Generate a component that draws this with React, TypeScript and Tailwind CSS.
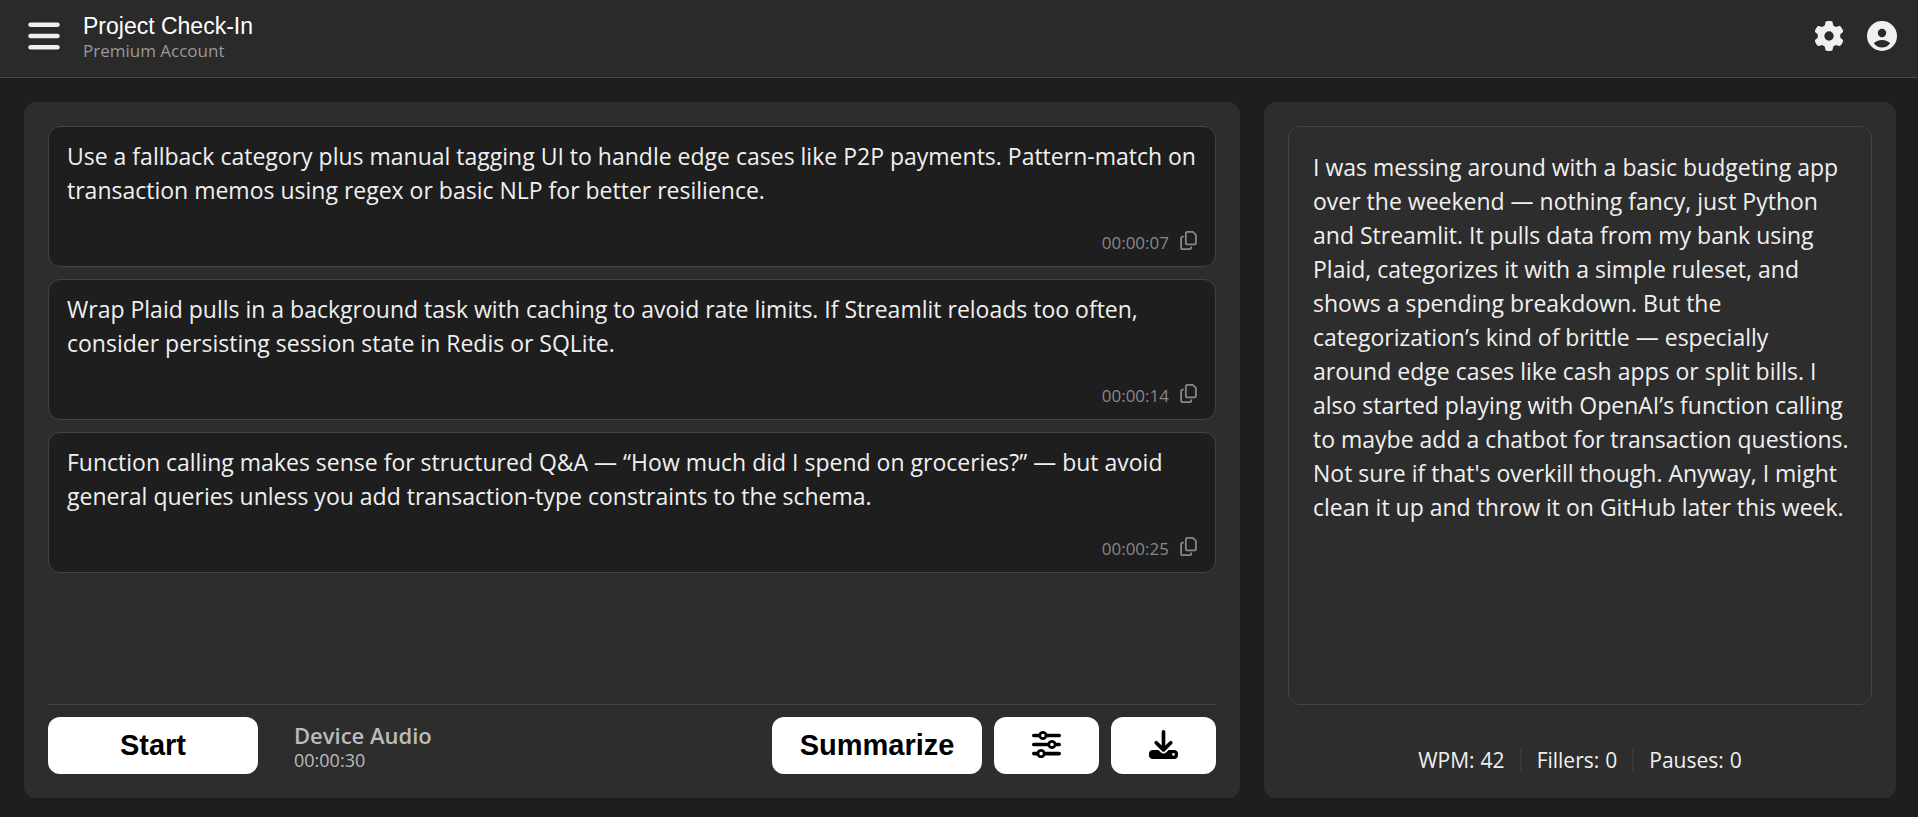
import React, { useState } from "react";
import { FaBars, FaDownload, FaGear, FaRegCopy, FaSliders } from "react-icons/fa6";

const insights = [
  {
    time: "00:00:07",
    text: "Use a fallback category plus manual tagging UI to handle edge cases like P2P payments. Pattern-match on transaction memos using regex or basic NLP for better resilience.",
  },
  {
    time: "00:00:14",
    text: "Wrap Plaid pulls in a background task with caching to avoid rate limits. If Streamlit reloads too often, consider persisting session state in Redis or SQLite.",
  },
  {
    time: "00:00:25",
    text: "Function calling makes sense for structured Q&A — “How much did I spend on groceries?” — but avoid general queries unless you add transaction-type constraints to the schema.",
  },
];

const transcript =
  "I was messing around with a basic budgeting app over the weekend — nothing fancy, just Python and Streamlit. It pulls data from my bank using Plaid, categorizes it with a simple ruleset, and shows a spending breakdown. But the categorization’s kind of brittle — especially around edge cases like cash apps or split bills. I also started playing with OpenAI’s function calling to maybe add a chatbot for transaction questions. Not sure if that's overkill though. Anyway, I might clean it up and throw it on GitHub later this week.";

const stats = [
  { label: "WPM", value: 42 },
  { label: "Fillers", value: 0 },
  { label: "Pauses", value: 0 },
];

const AccountIcon = () => (
  <svg viewBox="0 0 30 30" className="size-[30px]" fill="currentColor" aria-hidden="true">
    <path
      fillRule="evenodd"
      d="M15 0a15 15 0 1 0 0 30a15 15 0 0 0 0-30zM15 7.8a4.2 4.2 0 1 1 0 8.4a4.2 4.2 0 0 1 0-8.4zM15 19c3.6 0 6.4 1.3 8.2 3.2c-1.9 2.7-4.9 4.3-8.2 4.3s-6.300-1.600-8.200-4.300c1.800-1.900 4.600-3.200 8.200-3.200z"
    />
  </svg>
);

const Header = () => (
  <header className="flex h-[78px] items-center justify-between border-b border-[#484848] bg-[#2a2a2a] pr-[21px] pb-[5px] pl-[26px] text-[#f0f0f0]">
    <div className="flex items-center gap-[21px]">
      <button type="button" aria-label="Open menu">
        <FaBars className="size-9" />
      </button>
      <div className="pt-1">
        <h1 className="font-['Liberation_Sans',sans-serif] text-[23px] leading-[26px] text-white">Project Check-In</h1>
        <p className="text-[17px] leading-6 text-[#999999]">Premium Account</p>
      </div>
    </div>
    <div className="flex items-center gap-[23px]">
      <button type="button" aria-label="Settings">
        <FaGear className="size-[30px]" />
      </button>
      <button type="button" aria-label="Account">
        <AccountIcon />
      </button>
    </div>
  </header>
);

const InsightCard = ({ time, text }: { time: string; text: string }) => (
  <li className="flex min-h-[141px] flex-col justify-between rounded-xl border border-[#444444] bg-[#1e1e1e] px-[18px] pt-3 pb-[11px]">
    <p className="text-[23px] leading-[34px]">{text}</p>
    <div className="flex items-start justify-end gap-[11px] text-[#888888]">
      <time className="text-[17px] leading-6">{time}</time>
      <button
        type="button"
        aria-label={`Copy note from ${time}`}
        onClick={() => navigator.clipboard?.writeText(text)}
      >
        <FaRegCopy className="h-[19px] w-[17px]" />
      </button>
    </div>
  </li>
);

const buttonClass =
  "flex h-[57px] items-center justify-center rounded-xl bg-white pb-0.5 font-['Liberation_Sans',sans-serif] text-[29px] leading-8 font-bold text-black hover:bg-gray-200";

const Controls = () => {
  const [running, setRunning] = useState(false);

  return (
    <div className="flex items-center justify-between border-t border-[#444444] pt-3">
      <div className="flex items-center gap-9">
        <button type="button" className={`${buttonClass} w-[210px]`} onClick={() => setRunning(!running)}>
          {running ? "Stop" : "Start"}
        </button>
        <div className="pt-0.5 text-[#bbbbbb]">
          <p className="text-[22px] leading-[26px] font-semibold">Device Audio</p>
          <p className="text-[18px] leading-6">00:00:30</p>
        </div>
      </div>
      <div className="flex gap-3">
        <button type="button" className={`${buttonClass} w-[210px]`}>
          Summarize
        </button>
        <button type="button" aria-label="Adjust" className={`${buttonClass} w-[105px]`}>
          <FaSliders />
        </button>
        <button type="button" aria-label="Download" className={`${buttonClass} w-[105px]`}>
          <FaDownload />
        </button>
      </div>
    </div>
  );
};

export default function App() {
  return (
    <div className="flex min-h-screen flex-col bg-[#1e1e1e] font-['Open_Sans','Segoe_UI',sans-serif] text-[#f0f0f0]">
      <Header />
      <main className="grid flex-1 grid-cols-[152fr_79fr] gap-6 pt-6 pr-[22px] pb-[19px] pl-6">
        <section className="flex flex-col justify-between rounded-xl bg-[#2d2d2d] p-6">
          <ul className="flex flex-col gap-3">
            {insights.map((item) => (
              <InsightCard key={item.time} {...item} />
            ))}
          </ul>
          <Controls />
        </section>
        <section className="flex flex-col gap-[43px] rounded-xl bg-[#2d2d2d] p-6">
          <div className="flex-1 rounded-xl border border-[#444444] py-[23px] pr-[21px] pl-6">
            <p className="text-[23px] leading-[34px]">{transcript}</p>
          </div>
          <dl className="flex justify-center divide-x-2 divide-[#373737] pb-0.5 text-[21px] leading-6">
            {stats.map(({ label, value }) => (
              <div key={label} className="flex gap-1.5 px-[15px]">
                <dt>{label}:</dt>
                <dd>{value}</dd>
              </div>
            ))}
          </dl>
        </section>
      </main>
    </div>
  );
}
